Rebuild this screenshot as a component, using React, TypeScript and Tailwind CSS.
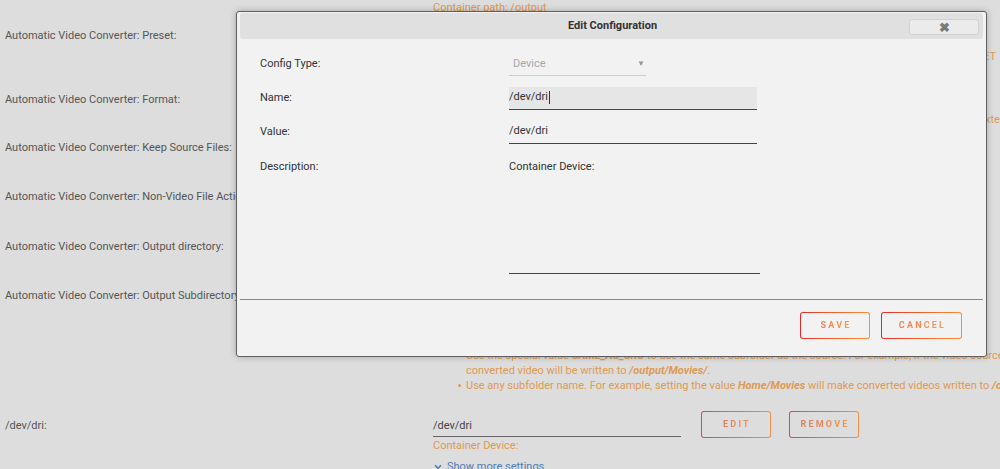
import { ChevronDown } from "lucide-react";

const orange = "text-[#de9a52]";

function GradButton({ label, w, h, muted }: { label: string; w: string; h: string; muted?: boolean }) {
  return (
    <div
      className={`${w} ${h} rounded-[3px] p-px bg-gradient-to-r ${
        muted ? "from-[#d64b45] to-[#ef8f4c]" : "from-[#e22828] to-[#ff8c2f]"
      }`}
    >
      <div className={`w-full h-full rounded-[2px] flex items-center justify-center ${muted ? "bg-[#dddddd]" : "bg-[#f2f2f2]"}`}>
        <span
          className={`bg-gradient-to-r bg-clip-text text-transparent font-bold text-[9px] tracking-[2.2px] pl-[2px] ${
            muted ? "from-[#df7a5c] to-[#eb9654]" : "from-[#f27a4f] to-[#ff9a4a]"
          }`}
        >
          {label}
        </span>
      </div>
    </div>
  );
}

function Row({ label, h, children }: { label: string; h: string; children?: React.ReactNode }) {
  return (
    <div className={`flex ${h}`}>
      <div className="w-[433px] shrink-0 pl-[5px] text-[#555555] leading-[14px] whitespace-nowrap">{label}</div>
      <div className="flex-1 min-w-0">{children}</div>
    </div>
  );
}

function Dialog() {
  return (
    <div className="absolute left-[236px] top-[11px] w-[751px] h-[346px] bg-[#f2f2f2] border border-[#5e5e5e] rounded-[3px] shadow-[0_0_6px_rgba(0,0,0,0.25)] flex flex-col">
      {/* title bar */}
      <div className="mx-[3px] mt-px h-[26px] bg-[#e0e0e0] rounded-[3px] flex items-center relative">
        <div className="flex-1 text-center font-bold text-[#333333] text-[11px] pl-[2px]">Edit Configuration</div>
        <div className="absolute right-[4px] top-[6px] w-[70px] h-[16px] rounded-[3px] border border-[#d2d2d2] bg-[#ebebeb] flex items-center justify-center text-[#7a7a7a] text-[13px] font-bold leading-none">
          ✖
        </div>
      </div>

      {/* body */}
      <div className="pt-[8px] pl-[23px] text-[11px] text-[#333333]">
        <div className="flex items-center h-[34px]">
          <div className="w-[249px]">Config Type:</div>
          <div className="w-[137px] h-[23px] mt-[1px] border-b border-[#cccccc] flex items-center justify-between pl-[4px] pr-[1px]">
            <span className="text-[#a8a8a8]">Device</span>
            <span className="text-[#999999] text-[8px]">▼</span>
          </div>
        </div>
        <div className="flex items-center h-[34px]">
          <div className="w-[249px]">Name:</div>
          <div className="w-[248px] h-[23px] bg-[#e6e6e6] border-b border-[#444444] flex items-center">
            <span>/dev/dri</span>
            <span className="w-px h-[13px] bg-[#333333] ml-[1px]" />
          </div>
        </div>
        <div className="flex items-center h-[34px]">
          <div className="w-[249px]">Value:</div>
          <div className="w-[248px] h-[23px] border-b border-[#444444] flex items-center">/dev/dri</div>
        </div>
        <div className="flex h-[126px] pt-[11px]">
          <div className="w-[249px] leading-[14px]">Description:</div>
          <div className="w-[251px] h-[114px] border-b border-[#444444] leading-[14px]">Container Device:</div>
        </div>
      </div>

      <div className="mx-[3px] mt-[24px] h-px bg-[#8a8a8a]" />

      <div className="flex justify-end gap-[11px] pr-[24px] pt-[12px]">
        <GradButton label="SAVE" w="w-[70px]" h="h-[27px]" />
        <GradButton label="CANCEL" w="w-[81px]" h="h-[27px]" />
      </div>
    </div>
  );
}

export default function App() {
  return (
    <div className="relative w-[1000px] h-[469px] overflow-hidden bg-[#dddddd] font-['Roboto',sans-serif] text-[11px]">
      <div className="flex flex-col">
        <div className="h-[29px] pl-[433px]">
          <div className={`${orange} leading-[14px] mt-px`}>Container path: /output</div>
        </div>
        <Row label="Automatic Video Converter: Preset:" h="h-[64px]">
          <div className={`${orange} leading-[14px] mt-[21px] text-right pr-[4px] whitespace-nowrap`}>
            Choose a HandBrake preset. Custom presets can be added in the container. Default: GENERAL_PRESET
          </div>
        </Row>
        <Row label="Automatic Video Converter: Format:" h="h-[48px]">
          <div className={`${orange} leading-[14px] mt-[20px] pl-[552px] whitespace-nowrap`}>xtension of the output file.</div>
        </Row>
        <Row label="Automatic Video Converter: Keep Source Files:" h="h-[49px]" />
        <Row label="Automatic Video Converter: Non-Video File Action:" h="h-[50px]" />
        <Row label="Automatic Video Converter: Output directory:" h="h-[49px]" />
        <Row label="Automatic Video Converter: Output Subdirectory:" h="h-[130px]">
          <ul className={`${orange} leading-[15px] pt-[59px] whitespace-nowrap`}>
            <li className="flex">
              <span className="w-[3px] h-[3px] rounded-full bg-[#de9a52] ml-[25px] mt-[6px] mr-[5px] shrink-0" />
              <span>
                Use the special value <b className="italic">SAME_AS_SRC</b> to use the same subfolder as the source. For example, if the video source is located in a subfolder
                <br />
                converted video will be written to <b className="italic">/output/Movies/</b>.
              </span>
            </li>
            <li className="flex">
              <span className="w-[3px] h-[3px] rounded-full bg-[#de9a52] ml-[25px] mt-[6px] mr-[5px] shrink-0" />
              <span>
                Use any subfolder name. For example, setting the value <b className="italic">Home/Movies</b> will make converted videos written to{" "}
                <b className="italic">/output/Home/Movies</b>.
              </span>
            </li>
          </ul>
        </Row>
        <Row label="/dev/dri:" h="h-[60px]">
          <div className="flex items-start">
            <div className="w-[248px] h-[20px] -mt-[2px] border-b border-[#666666] text-[#444444] flex items-center">/dev/dri</div>
            <div className="flex gap-[18px] ml-[20px] -mt-[8px]">
              <GradButton label="EDIT" w="w-[70px]" h="h-[27px]" muted />
              <GradButton label="REMOVE" w="w-[70px]" h="h-[27px]" muted />
            </div>
          </div>
          <div className={`${orange} leading-[14px] mt-[1px]`}>Container Device:</div>
          <div className="flex items-center gap-[4px] mt-[7px] text-[#4f7db3] leading-[14px]">
            <ChevronDown className="w-[10px] h-[10px]" strokeWidth={4} />
            <span>Show more settings</span>
          </div>
        </Row>
      </div>
      <Dialog />
    </div>
  );
}
